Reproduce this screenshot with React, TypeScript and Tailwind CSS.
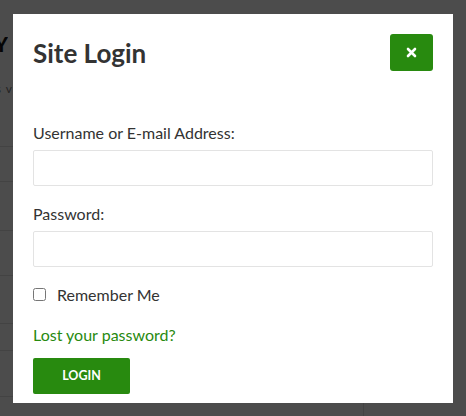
import React from 'react';

const rowHeights = [35, 49, 45, 48, 27, 46];

const BackgroundPage: React.FC = () => (
  <div className="flex h-[416px] bg-white">
    <div className="w-[363px]">
      <div className="flex h-[147px] flex-col border-b border-[#e2e2e2]">
        <div className="mt-[29px] flex w-[8px] justify-end overflow-hidden whitespace-nowrap text-[20px] font-black text-[#111]">
          DIRECTORY
        </div>
        <div className="mt-[21px] flex w-[13px] justify-end overflow-hidden whitespace-nowrap text-[12px] tracking-[1px] text-[#777]">
          results v
        </div>
      </div>
      {rowHeights.map((h, i) => (
        <div key={i} className="border-b border-[#e2e2e2]" style={{ height: h }} />
      ))}
    </div>
    <div className="flex flex-1 flex-col justify-end">
      <div className="h-[14px] border-l border-[#e2e2e2]" />
    </div>
  </div>
);

const Field: React.FC<{ label: string; type?: string }> = ({ label, type = 'text' }) => (
  <div className="flex flex-col">
    <label className="text-[16px] leading-[21px] text-[#333]">{label}</label>
    <input
      type={type}
      className="mt-[7px] h-[36px] w-full rounded-[2px] border border-[#e3e3e3] bg-white px-3 outline-none"
    />
  </div>
);

const App: React.FC = () => {
  return (
    <div className="relative h-[416px] w-[466px] overflow-hidden font-['Lato',sans-serif]">
      <BackgroundPage />
      <div className="absolute inset-0 bg-black/70" />
      <div className="absolute left-[13px] top-[14px] flex h-[389px] w-[440px] flex-col bg-white px-[20px] pt-[20px]">
        <div className="flex h-[37px] items-center justify-between">
          <h2 className="text-[26px] font-bold leading-none text-[#333]">Site Login</h2>
          <button className="flex h-[37px] w-[43px] items-center justify-center rounded-[3px] bg-[#288a0f]">
            <svg width="11" height="11" viewBox="0 0 11 11" fill="none" stroke="white" strokeWidth="2.6" strokeLinecap="round">
              <path d="M2 2 L9 9 M9 2 L2 9" />
            </svg>
          </button>
        </div>
        <div className="mt-[51px] flex flex-col gap-[17px]">
          <Field label="Username or E-mail Address:" />
          <Field label="Password:" type="password" />
        </div>
        <label className="mt-[17px] flex items-center text-[16px] leading-[21px] text-[#333]">
          <input type="checkbox" className="m-0 h-[13px] w-[13px] accent-[#288a0f]" />
          <span className="ml-[11px]">Remember Me</span>
        </label>
        <a href="#" className="mt-[19px] text-[16px] leading-[21px] text-[#288a0f]">
          Lost your password?
        </a>
        <button className="mt-[13px] h-[36px] w-[97px] rounded-[2px] bg-[#288a0f] text-[12.5px] font-bold uppercase text-white">
          Login
        </button>
      </div>
    </div>
  );
};

export default App;
